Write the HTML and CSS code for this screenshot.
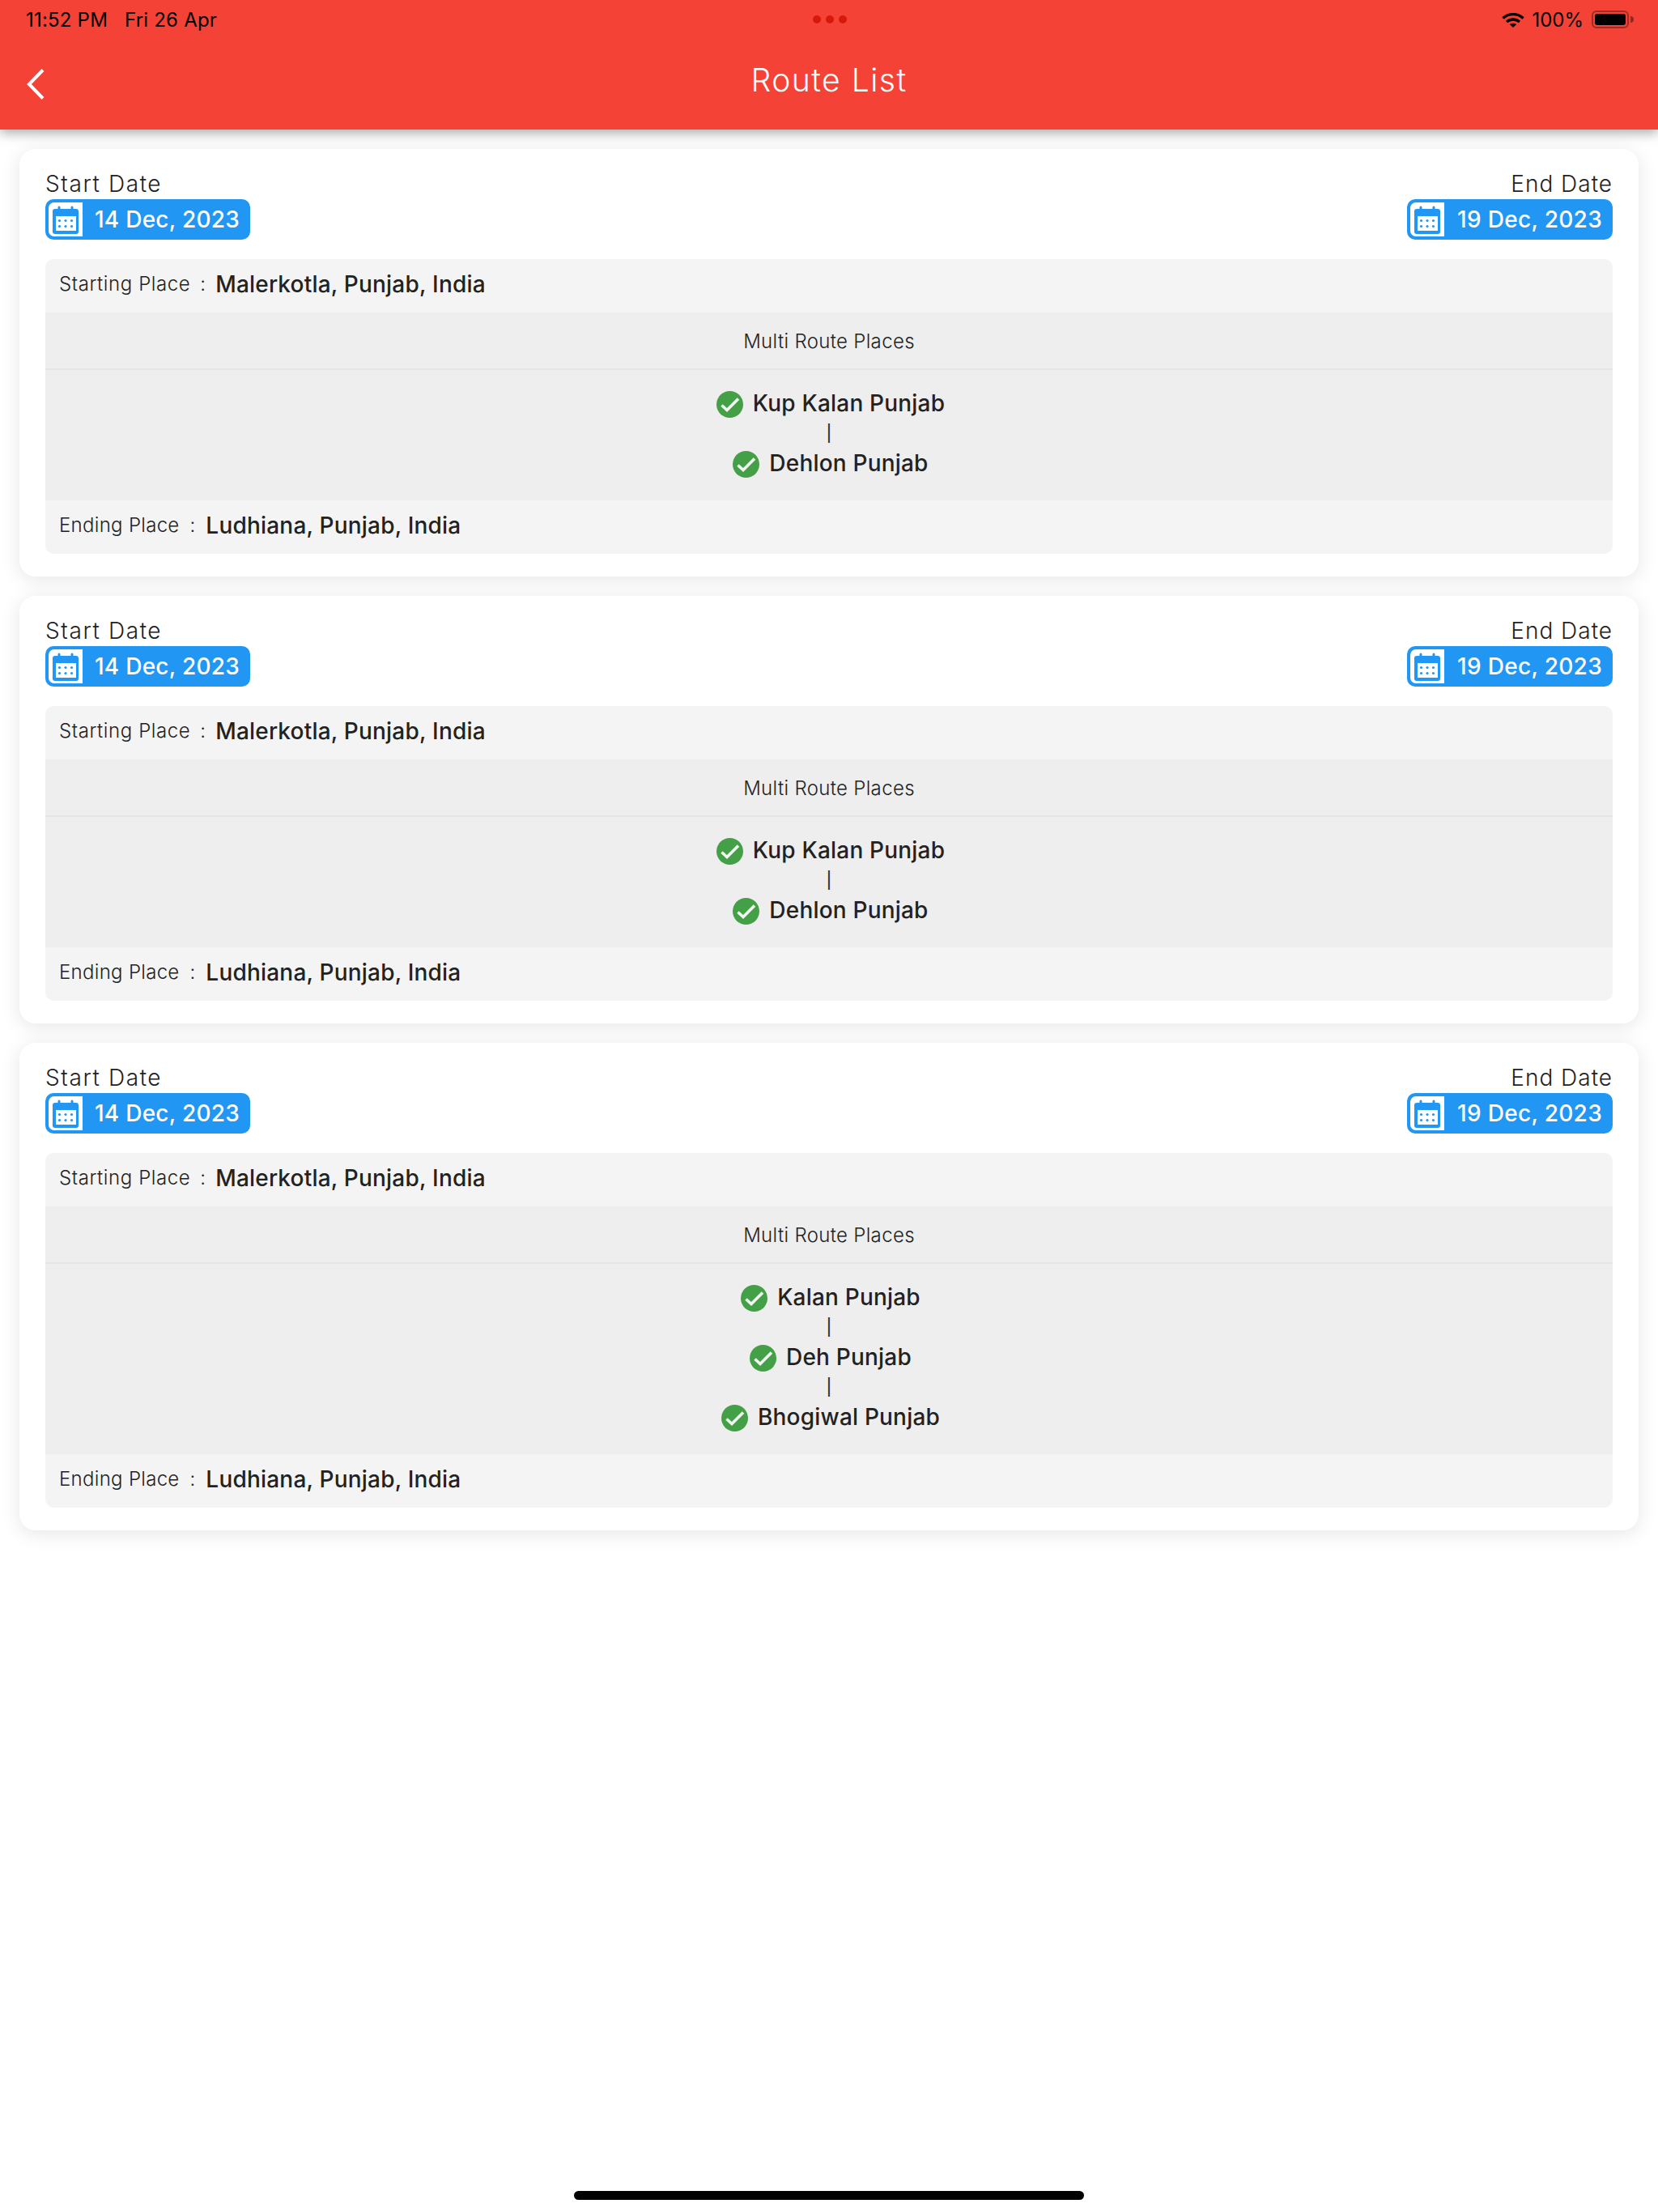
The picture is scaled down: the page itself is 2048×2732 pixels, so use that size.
FILE: index.html
```html
<!DOCTYPE html>
<html lang="en">
<head>
    <meta charset="UTF-8">
    <title>Route List</title>
    <link rel="stylesheet" href="styles.css">
</head>
<body>
    <svg class="defs" width="0" height="0">
        <symbol id="calendar" viewBox="0 0 42 42">
            <path fill="#2196f3" d="M8 8h3.500V6a1.500 1.500 0 0 1 3 0v2h13V6a1.500 1.500 0 0 1 3 0v2H34a3 3 0 0 1 3 3v25a3 3 0 0 1-3 3H8a3 3 0 0 1-3-3V11a3 3 0 0 1 3-3z"/>
            <rect x="9" y="17" width="25" height="18" fill="#fff"/>
            <g fill="#2196f3">
                <circle cx="13.500" cy="22.500" r="1.600"/><circle cx="21" cy="22.500" r="1.600"/><circle cx="28.500" cy="22.500" r="1.600"/>
                <circle cx="13.500" cy="29.500" r="1.600"/><circle cx="21" cy="29.500" r="1.600"/><circle cx="28.500" cy="29.500" r="1.600"/>
            </g>
        </symbol>
        <symbol id="check" viewBox="0 0 33 33">
            <circle cx="16.500" cy="16.500" r="16.500" fill="#43a047"/>
            <path d="M6.500 17.500l6.500 6 14-14" fill="none" stroke="#f2f7f2" stroke-width="3.600"/>
        </symbol>
    </svg>

    <header class="app-header">
        <div class="status-bar">
            <div class="status-left">
                <span>11:52 PM</span>
                <span>Fri 26 Apr</span>
            </div>
            <div class="status-dots"><i></i><i></i><i></i></div>
            <div class="status-right">
                <svg class="wifi" width="28" height="19" viewBox="0 0 28 19">
                    <path d="M1.500 7.500C8.500 1 19.500 1 26.500 7.500M6 12c4.800-4 11.200-4 16 0" fill="none" stroke="#000" stroke-width="3.400"/>
                    <path d="M9.800 15c2.500-1.800 5.900-1.800 8.400 0L14 19z"/>
                </svg>
                <span class="battery-pct">100%</span>
                <div class="battery"><div class="battery-fill"></div></div>
                <div class="battery-nub"></div>
            </div>
        </div>
        <div class="nav-bar">
            <svg class="back" width="22" height="38" viewBox="0 0 22 38">
                <path d="M20 1.500L3 19l17 17.500" fill="none" stroke="#fff" stroke-width="4"/>
            </svg>
            <h1 class="title">Route List</h1>
        </div>
    </header>

    <main class="route-list">
        <section class="card">
            <div class="dates">
                <div class="date-col">
                    <div class="date-label">Start Date</div>
                    <div class="date-pill">
                        <span class="cal-box"><svg width="42" height="42"><use href="#calendar"/></svg></span>
                        <span>14 Dec, 2023</span>
                    </div>
                </div>
                <div class="date-col date-end">
                    <div class="date-label">End Date</div>
                    <div class="date-pill">
                        <span class="cal-box"><svg width="42" height="42"><use href="#calendar"/></svg></span>
                        <span>19 Dec, 2023</span>
                    </div>
                </div>
            </div>
            <div class="places">
                <div class="place-row">
                    <span class="place-label">Starting Place</span><span class="colon">:</span><span class="place-value">Malerkotla, Punjab, India</span>
                </div>
                <div class="multi">
                    <div class="multi-title">Multi Route Places</div>
                    <div class="stops">
                        <div class="stop"><svg width="33" height="33"><use href="#check"/></svg><span>Kup Kalan Punjab</span></div>
                        <div class="stop-sep">|</div>
                        <div class="stop"><svg width="33" height="33"><use href="#check"/></svg><span>Dehlon Punjab</span></div>
                    </div>
                </div>
                <div class="place-row place-end">
                    <span class="place-label">Ending Place</span><span class="colon">:</span><span class="place-value">Ludhiana, Punjab, India</span>
                </div>
            </div>
        </section>

        <section class="card">
            <div class="dates">
                <div class="date-col">
                    <div class="date-label">Start Date</div>
                    <div class="date-pill">
                        <span class="cal-box"><svg width="42" height="42"><use href="#calendar"/></svg></span>
                        <span>14 Dec, 2023</span>
                    </div>
                </div>
                <div class="date-col date-end">
                    <div class="date-label">End Date</div>
                    <div class="date-pill">
                        <span class="cal-box"><svg width="42" height="42"><use href="#calendar"/></svg></span>
                        <span>19 Dec, 2023</span>
                    </div>
                </div>
            </div>
            <div class="places">
                <div class="place-row">
                    <span class="place-label">Starting Place</span><span class="colon">:</span><span class="place-value">Malerkotla, Punjab, India</span>
                </div>
                <div class="multi">
                    <div class="multi-title">Multi Route Places</div>
                    <div class="stops">
                        <div class="stop"><svg width="33" height="33"><use href="#check"/></svg><span>Kup Kalan Punjab</span></div>
                        <div class="stop-sep">|</div>
                        <div class="stop"><svg width="33" height="33"><use href="#check"/></svg><span>Dehlon Punjab</span></div>
                    </div>
                </div>
                <div class="place-row place-end">
                    <span class="place-label">Ending Place</span><span class="colon">:</span><span class="place-value">Ludhiana, Punjab, India</span>
                </div>
            </div>
        </section>

        <section class="card">
            <div class="dates">
                <div class="date-col">
                    <div class="date-label">Start Date</div>
                    <div class="date-pill">
                        <span class="cal-box"><svg width="42" height="42"><use href="#calendar"/></svg></span>
                        <span>14 Dec, 2023</span>
                    </div>
                </div>
                <div class="date-col date-end">
                    <div class="date-label">End Date</div>
                    <div class="date-pill">
                        <span class="cal-box"><svg width="42" height="42"><use href="#calendar"/></svg></span>
                        <span>19 Dec, 2023</span>
                    </div>
                </div>
            </div>
            <div class="places">
                <div class="place-row">
                    <span class="place-label">Starting Place</span><span class="colon">:</span><span class="place-value">Malerkotla, Punjab, India</span>
                </div>
                <div class="multi">
                    <div class="multi-title">Multi Route Places</div>
                    <div class="stops">
                        <div class="stop"><svg width="33" height="33"><use href="#check"/></svg><span>Kalan Punjab</span></div>
                        <div class="stop-sep">|</div>
                        <div class="stop"><svg width="33" height="33"><use href="#check"/></svg><span>Deh Punjab</span></div>
                        <div class="stop-sep">|</div>
                        <div class="stop"><svg width="33" height="33"><use href="#check"/></svg><span>Bhogiwal Punjab</span></div>
                    </div>
                </div>
                <div class="place-row place-end">
                    <span class="place-label">Ending Place</span><span class="colon">:</span><span class="place-value">Ludhiana, Punjab, India</span>
                </div>
            </div>
        </section>
    </main>

    <div class="home-bar"></div>
</body>
</html>
```

FILE: styles.css
```css
* {
    box-sizing: border-box;
}

body {
    margin: 0;
    height: 2732px;
    overflow: hidden;
    display: flex;
    flex-direction: column;
    background-color: #fff;
    color: #222;
    font-family: Inter, "Noto Sans", sans-serif;
}

.defs {
    position: absolute;
}

/* Header */
.app-header {
    position: relative;
    z-index: 2;
    height: 160px;
    background-color: #f44336;
    box-shadow: 0 4px 14px rgba(0, 0, 0, 0.35);
}

.status-bar {
    height: 48px;
    padding: 0 30px 0 32px;
    display: grid;
    grid-template-columns: 1fr auto 1fr;
    align-items: center;
    color: #000;
    font-size: 24px;
}

.status-left {
    display: flex;
    gap: 21px;
    letter-spacing: 0.2px;
}

.status-dots {
    display: flex;
    gap: 6px;
}

.status-dots i {
    width: 10px;
    height: 10px;
    border-radius: 50%;
    background-color: #d5190a;
}

.status-right {
    display: flex;
    justify-content: flex-end;
    align-items: center;
}

.wifi {
    margin-right: 9px;
}

.battery-pct {
    margin-right: 10px;
}

.battery {
    width: 46px;
    height: 22px;
    padding: 2px;
    border: 2px solid rgba(0, 0, 0, 0.35);
    border-radius: 6px;
}

.battery-fill {
    height: 100%;
    background-color: #000;
    border-radius: 3px;
}

.battery-nub {
    width: 4px;
    height: 8px;
    margin-left: 2px;
    background-color: rgba(0, 0, 0, 0.4);
    border-radius: 0 4px 4px 0;
}

.nav-bar {
    height: 112px;
    position: relative;
    display: flex;
    justify-content: center;
}

.back {
    position: absolute;
    left: 33px;
    top: 37px;
}

.title {
    margin: 0;
    color: #fff;
    font-size: 39px;
    font-weight: 300;
    line-height: 102px;
    letter-spacing: 1.5px;
}

/* Cards */
.route-list {
    padding: 24px;
    display: flex;
    flex-direction: column;
    gap: 24px;
}

.card {
    padding: 24px 32px 28px;
    background-color: #fff;
    border-radius: 20px;
    box-shadow: 0 4px 24px rgba(0, 0, 0, 0.1);
}

.dates {
    display: flex;
    justify-content: space-between;
}

.date-col {
    display: flex;
    flex-direction: column;
    align-items: flex-start;
}

.date-end {
    align-items: flex-end;
}

.date-label {
    font-size: 28px;
    font-weight: 300;
    line-height: 38px;
    letter-spacing: 1.6px;
}

.date-end .date-label {
    letter-spacing: 1px;
}

.date-pill {
    height: 50px;
    padding: 4px 13px 4px 4px;
    display: flex;
    align-items: center;
    gap: 15px;
    border-radius: 10px;
    background-color: #2196f3;
    color: #fff;
    font-size: 28px;
    font-weight: 500;
    letter-spacing: 0.25px;
}

.date-end .date-pill {
    gap: 16px;
    letter-spacing: 0.3px;
}

.cal-box {
    width: 42px;
    height: 42px;
    display: block;
    background-color: #fff;
    border-radius: 7px 0 0 7px;
}

.cal-box svg {
    display: block;
}

/* Places table */
.places {
    margin-top: 24px;
}

.place-row {
    height: 66px;
    padding: 0 0 5px 17px;
    display: flex;
    align-items: center;
    background-color: #f4f4f4;
    border-radius: 10px 10px 0 0;
}

.place-end {
    border-radius: 0 0 10px 10px;
}

.place-label {
    font-size: 24px;
    font-weight: 300;
    letter-spacing: 0.6px;
}

.place-end .place-label {
    letter-spacing: 0.3px;
}

.colon {
    margin: 0 12px;
    font-size: 24px;
    font-weight: 300;
}

.place-end .colon {
    margin: 0 13px;
}

.place-value {
    font-size: 28px;
    font-weight: 500;
    letter-spacing: 0.2px;
}

.multi {
    background-color: #eee;
}

.multi-title {
    height: 71px;
    border-bottom: 2px solid #e4e4e4;
    line-height: 71px;
    text-align: center;
    font-size: 24px;
    font-weight: 300;
    letter-spacing: 0.33px;
}

.stops {
    padding: 22px 0 28px;
    display: flex;
    flex-direction: column;
    align-items: center;
}

.stop {
    height: 37px;
    padding-left: 4px;
    display: flex;
    align-items: center;
    gap: 12px;
    font-size: 28px;
    font-weight: 500;
    letter-spacing: 0.2px;
}

.stop svg {
    margin-top: 3px;
}

.stop-sep {
    height: 37px;
    padding-top: 1px;
    line-height: 37px;
    font-size: 20px;
    font-weight: 500;
    color: #333;
}

.home-bar {
    width: 630px;
    height: 11px;
    margin: auto auto 15px;
    background-color: #000;
    border-radius: 6px;
}
```
